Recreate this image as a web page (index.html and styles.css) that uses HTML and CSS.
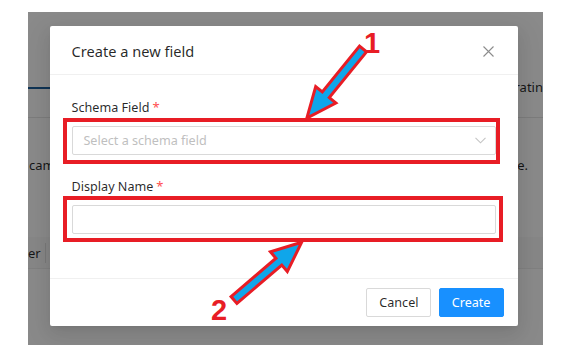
FILE: index.html
```html
<!DOCTYPE html>
<html lang="en">
<head>
<meta charset="utf-8">
<title>Create a new field</title>
<link rel="stylesheet" href="styles.css">
</head>
<body>
<div class="stage">
  <div class="screen">
    <div class="page">
      <div class="tabs">
        <div class="tab-active"></div>
        <span class="tab-text">ratin</span>
      </div>
      <div class="para">
        <span class="para-left">cam</span>
        <span class="para-right">e.</span>
      </div>
      <div class="thead">
        <span class="th-text">er</span>
        <span class="th-sep"></span>
      </div>
    </div>
    <div class="mask"></div>
    <div class="modal">
      <div class="modal-header">
        <span class="modal-title">Create a new field</span>
        <svg class="close" width="11" height="11" viewBox="0 0 11 11"><path d="M0.5 0.5L10.5 10.5M10.5 0.5L0.5 10.5" stroke="#8c8c8c" stroke-width="1.1" fill="none"/></svg>
      </div>
      <div class="modal-body">
        <div class="form-item">
          <label class="form-label">Schema Field<span class="req">*</span></label>
          <div class="select">
            <span class="placeholder">Select a schema field</span>
            <svg class="chev" width="11" height="7" viewBox="0 0 11 7"><path d="M0.5 0.8L5.5 5.8L10.5 0.8" stroke="#c4c4c4" stroke-width="1.1" fill="none"/></svg>
          </div>
        </div>
        <div class="form-item">
          <label class="form-label">Display Name<span class="req">*</span></label>
          <div class="input"></div>
        </div>
      </div>
      <div class="modal-footer">
        <button class="btn">Cancel</button>
        <button class="btn btn-primary">Create</button>
      </div>
    </div>
  </div>
  <svg class="annot" width="571" height="363" viewBox="0 0 571 363">
    <rect x="65" y="120" width="433" height="42" fill="none" stroke="#e81d25" stroke-width="4"/>
    <rect x="65" y="198" width="436" height="42" fill="none" stroke="#e81d25" stroke-width="4"/>
    <g transform="translate(363,49) rotate(129.1)">
      <polygon points="0,-4.5 59,-4.5 59,-13 89,0 59,13 59,4.5 0,4.5" fill="#0fa6ea" stroke="#e81d25" stroke-width="3" stroke-linejoin="miter"/>
    </g>
    <g transform="translate(234,300) rotate(-40.5)">
      <polygon points="0,-4.5 59,-4.5 59,-13 89,0 59,13 59,4.5 0,4.5" fill="#0fa6ea" stroke="#e81d25" stroke-width="3" stroke-linejoin="miter"/>
    </g>
    <text x="364" y="53" class="num">1</text>
    <text x="211" y="320" class="num">2</text>
  </svg>
</div>
</body>
</html>
```
FILE: styles.css
```css
* { box-sizing: border-box; }
html, body { margin: 0; padding: 0; background: #fff; }
body { width: 571px; height: 363px; overflow: hidden; font-family: "Segoe UI", "Noto Sans", "Open Sans", sans-serif; }

.stage { position: relative; width: 571px; height: 363px; padding: 12px 0 0 28px; }

.screen {
  position: relative;
  width: 515px;
  height: 333px;
  overflow: hidden;
  background: #fff;
}

.page { display: flex; flex-direction: column; color: rgba(0,0,0,0.85); font-size: 12.6px; }

.tabs {
  position: relative;
  height: 106px;
  border-bottom: 1px solid #e6e6e6;
  display: flex;
  justify-content: flex-end;
  align-items: flex-start;
}
.tab-active { position: absolute; left: 0; top: 75px; width: 60px; height: 2px; background: #1c5f9c; }
.tab-text { margin-top: 66px; margin-right: 0; font-size: 13px; }

.para {
  display: flex;
  justify-content: space-between;
  margin-top: 37px;
  height: 20px;
  line-height: 20px;
  font-size: 13px;
}
.para-left { margin-left: 1px; }
.para-right { margin-right: 15px; }

.thead {
  margin-top: 62px;
  height: 32px;
  background: #fafafa;
  border-bottom: 1px solid #ececec;
  display: flex;
  align-items: center;
  font-size: 13px;
}
.th-text { margin-left: 0; }
.th-sep { width: 1px; height: 20px; background: #e0e0e0; margin-left: 4px; }

.mask { position: absolute; inset: 0; background: rgba(0,0,0,0.46); }

.modal {
  position: absolute;
  left: 22px;
  top: 14px;
  width: 468px;
  background: #fff;
  border-radius: 2px;
  box-shadow: 0 3px 6px -4px rgba(0,0,0,0.12), 0 6px 16px 0 rgba(0,0,0,0.08), 0 9px 28px 8px rgba(0,0,0,0.05);
  display: flex;
  flex-direction: column;
}

.modal-header {
  height: 49px;
  padding: 0 24px 0 21.6px;
  border-bottom: 1px solid #f0f0f0;
  display: flex;
  align-items: center;
  justify-content: space-between;
}
.modal-title { font-size: 14.6px; color: rgba(0,0,0,0.85); line-height: 20px; margin-top: 2px; }
.close { display: block; margin-top: 3px; }

.modal-body { padding: 23px 21.6px 43.5px; display: flex; flex-direction: column; gap: 21.6px; }

.form-item { display: flex; flex-direction: column; }
.form-label {
  height: 28.4px;
  padding-bottom: 8.6px;
  line-height: 19.8px;
  font-size: 12.6px;
  color: rgba(0,0,0,0.85);
}
.req { color: #ff4d4f; margin-left: 3px; font-size: 13px; }

.select, .input {
  height: 29px;
  border: 1px solid #d9d9d9;
  border-radius: 2px;
  background: #fff;
}
.select {
  display: flex;
  align-items: center;
  justify-content: space-between;
  padding: 0 9px 0 10.8px;
}
.placeholder { color: #bfbfbf; font-size: 12.6px; }
.chev { display: block; }

.modal-footer {
  border-top: 1px solid #f0f0f0;
  padding: 9px 14.4px;
  display: flex;
  justify-content: flex-end;
  gap: 7.2px;
}

.btn {
  height: 29px;
  width: 65px;
  padding: 0;
  font-family: inherit;
  font-size: 12.6px;
  color: rgba(0,0,0,0.85);
  background: #fff;
  border: 1px solid #d9d9d9;
  border-radius: 2px;
}
.btn-primary { background: #1890ff; border-color: #1890ff; color: #fff; }

.annot { position: absolute; left: 0; top: 0; pointer-events: none; }
.num { font-family: "Liberation Sans", Arial, sans-serif; font-weight: bold; font-size: 29px; fill: #e81d25; }
```
